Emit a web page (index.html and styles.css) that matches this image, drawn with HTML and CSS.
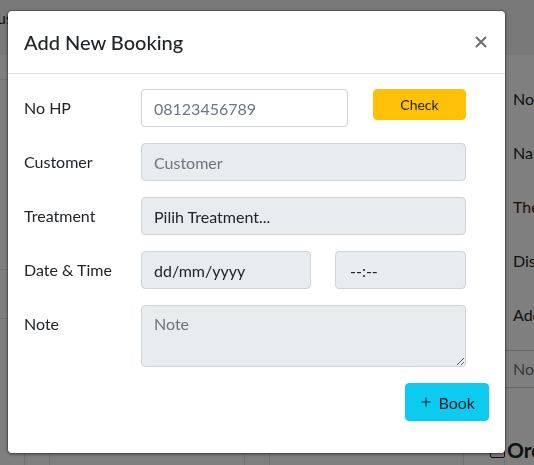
FILE: index.html
```html
<!DOCTYPE html>
<html lang="id">

<head>
    <meta charset="UTF-8">
    <title>Booking</title>
    <link rel="stylesheet" href="styles.css">
</head>

<body>
    <div class="page">
        <nav class="topbar">
            <span class="brand">us</span>
        </nav>

        <main class="main">
            <!-- Schedule table behind the dialog -->
            <section class="schedule">
                <table class="schedule-table">
                    <tr class="row-head">
                        <td></td><td></td><td></td><td></td><td></td><td></td>
                    </tr>
                    <tr class="row-tall">
                        <td></td><td></td><td></td><td></td><td></td><td></td>
                    </tr>
                    <tr class="row-mid">
                        <td></td><td></td><td></td><td></td><td></td><td></td>
                    </tr>
                    <tr class="row-last">
                        <td></td><td></td><td></td><td></td><td></td><td></td>
                    </tr>
                </table>
            </section>

            <!-- Side form -->
            <aside class="side-form">
                <div class="side-row">No HP</div>
                <div class="side-row">Nama</div>
                <div class="side-row side-danger">Therapist</div>
                <div class="side-row">Diskon</div>
                <div class="side-row">Addon</div>
                <div class="side-input">Note</div>
                <div class="side-check"><span class="side-box"></span>Order</div>
            </aside>
        </main>
    </div>

    <div class="backdrop"></div>

    <div class="modal">
        <div class="modal-header">
            <h5 class="modal-title">Add New Booking</h5>
            <button type="button" class="close-btn" aria-label="Close">
                <svg width="12" height="12" viewBox="0 0 12 12">
                    <path d="M1.5 1.5 L10.5 10.5 M10.5 1.5 L1.5 10.5" stroke="currentColor" stroke-width="2" stroke-linecap="round"/>
                </svg>
            </button>
        </div>

        <form class="modal-body">
            <div class="form-row">
                <label for="phone">No HP</label>
                <div class="field split">
                    <input type="text" id="phone" class="input phone" placeholder="08123456789">
                    <button type="button" class="btn btn-check">Check</button>
                </div>
            </div>
            <div class="form-row">
                <label for="customer">Customer</label>
                <div class="field">
                    <input type="text" id="customer" class="input" placeholder="Customer" disabled>
                </div>
            </div>
            <div class="form-row">
                <label for="treatment">Treatment</label>
                <div class="field">
                    <input type="text" id="treatment" class="input" value="Pilih Treatment..." disabled>
                </div>
            </div>
            <div class="form-row">
                <label for="date">Date &amp; Time</label>
                <div class="field split">
                    <input type="text" id="date" class="input date" value="dd/mm/yyyy" disabled>
                    <input type="text" id="time" class="input time" value="--:--" disabled>
                </div>
            </div>
            <div class="form-row">
                <label for="note">Note</label>
                <div class="field">
                    <textarea id="note" class="input" rows="2" placeholder="Note" disabled></textarea>
                </div>
            </div>
            <div class="modal-actions">
                <button type="submit" class="btn btn-book">
                    <svg width="10" height="10" viewBox="0 0 10 10">
                        <path d="M5 0.5 V9.5 M0.5 5 H9.5" stroke="currentColor" stroke-width="1.1"/>
                    </svg>
                    Book
                </button>
            </div>
        </form>
    </div>
</body>

</html>
```

FILE: styles.css
```css
body {
    font-family: "Segoe UI", Lato, sans-serif;
    margin: 0;
    padding: 0;
    background-color: #fff;
    color: #212529;
    overflow: hidden;
}

/* page underneath */
.page {
    height: 465px;
}

.topbar {
    height: 55px;
    background-color: #f2f2f2;
    font-size: 16px;
    line-height: 24px;
    padding-top: 6px;
    box-sizing: border-box;
}

.brand {
    margin-left: -3px;
}

.main {
    display: grid;
    grid-template-columns: 505px 1fr;
}

.schedule-table {
    width: 505px;
    border-collapse: collapse;
    table-layout: fixed;
}

.schedule-table td {
    border: 1px solid #dee2e6;
    padding: 0;
}

.schedule-table td:first-child {
    border-left: none;
    width: 24px;
}

.schedule-table td:nth-child(2),
.schedule-table td:nth-child(4) {
    width: 24px;
}

.schedule-table td:nth-child(3) {
    width: 194px;
}

.schedule-table td:nth-child(5) {
    width: 193px;
}

.schedule-table .row-head td {
    border-top: none;
    height: 24px;
}

.row-tall td {
    height: 189px;
}

.row-mid td {
    height: 48px;
}

.row-last td {
    height: 160px;
}

.side-form {
    padding-top: 25px;
    white-space: nowrap;
    font-size: 16px;
}

.side-row {
    padding-left: 8px;
    line-height: 38px;
    margin-bottom: 16px;
    overflow: hidden;
}

.side-danger {
    color: #4a1414;
}

.side-input {
    border-top: 1px solid #ced4da;
    border-bottom: 1px solid #ced4da;
    line-height: 36px;
    padding-left: 8px;
    color: #6c757d;
    overflow: hidden;
}

.side-check {
    margin-top: 50px;
    margin-left: -15px;
    font-size: 21px;
    font-weight: 700;
    line-height: 24px;
    display: flex;
    align-items: center;
    gap: 2px;
}

.side-box {
    width: 13px;
    height: 14px;
    border: 1.5px solid #3a1030;
    border-radius: 2px;
}

/* dialog */
.backdrop {
    position: fixed;
    inset: 0;
    background-color: rgba(0, 0, 0, 0.5);
}

.modal {
    position: absolute;
    top: 10px;
    left: 7px;
    width: 499px;
    box-sizing: border-box;
    background-color: #fff;
    border: 1px solid rgba(0, 0, 0, 0.2);
    border-radius: 5px;
    box-shadow: 0 1px 3px rgba(0, 0, 0, 0.3);
    background-clip: padding-box;
}

.modal-header {
    display: flex;
    align-items: center;
    padding: 16px;
    border-bottom: 1px solid #dee2e6;
}

.modal-title {
    margin: 0;
    font-size: 20px;
    font-weight: 500;
    line-height: 30px;
}

.close-btn {
    margin-left: auto;
    margin-right: 2px;
    padding: 0;
    border: none;
    background: none;
    color: #6f6f6f;
    display: flex;
    cursor: pointer;
}

.modal-body {
    padding: 15px 16px 32px;
}

.form-row {
    display: grid;
    grid-template-columns: 117px 325px;
    margin-bottom: 16px;
}

.form-row label {
    font-size: 16px;
    line-height: 24px;
    padding-top: 7px;
}

.field {
    display: flex;
}

.split {
    justify-content: space-between;
    align-items: flex-start;
}

.input {
    width: 100%;
    box-sizing: border-box;
    height: 38px;
    padding: 6px 12px;
    font-family: inherit;
    font-size: 16px;
    line-height: 24px;
    color: #495057;
    background-color: #fff;
    border: 1px solid #ced4da;
    border-radius: 4px;
}

.input::placeholder {
    color: #6c757d;
}

.input:disabled {
    background-color: #e9ecef;
    color: #212529;
    opacity: 1;
}

textarea.input {
    height: 62px;
    resize: vertical;
    display: block;
}

.phone {
    width: 207px;
}

.date {
    width: 170px;
}

.time {
    width: 131px;
    padding-left: 14px;
}

.btn {
    font-family: inherit;
    border: 1px solid transparent;
    border-radius: 4px;
    color: #212529;
    cursor: pointer;
}

.btn-check {
    width: 93px;
    height: 31px;
    font-size: 14px;
    background-color: #ffc107;
    border-color: #ffc107;
}

.modal-actions {
    display: flex;
    justify-content: flex-end;
}

.btn-book {
    height: 38px;
    padding: 6px 13px 6px 15px;
    font-size: 16px;
    background-color: #0dcaf0;
    border-color: #0dcaf0;
    display: flex;
    align-items: center;
    gap: 8px;
}
```
